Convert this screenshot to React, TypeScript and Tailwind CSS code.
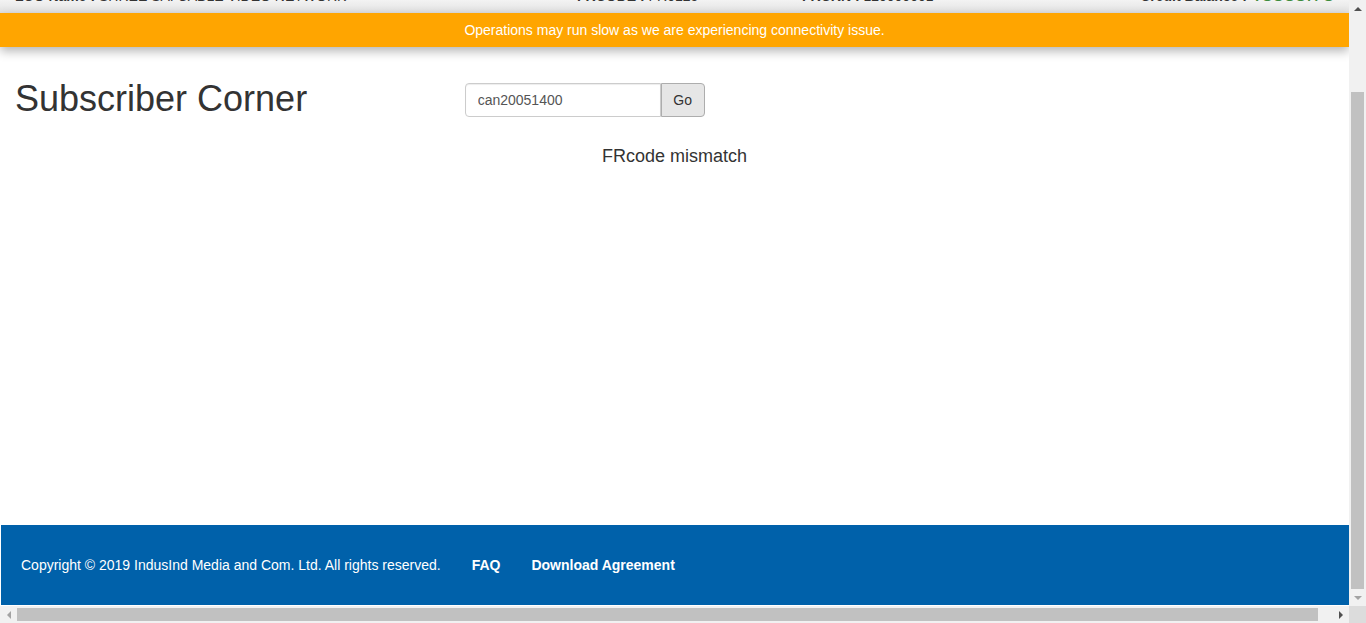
import React from 'react'

const font = { fontFamily: '"Liberation Sans", Arial, sans-serif' }

const Arrow = ({ dir, color }: { dir: 'up' | 'down' | 'left' | 'right'; color: string }) => {
  const pts = {
    up: '0,4 4,0 8,4',
    down: '0,0 8,0 4,4',
    left: '4,0 4,8 0,4',
    right: '0,0 4,4 0,8',
  }[dir]
  const vertical = dir === 'up' || dir === 'down'
  return (
    <svg width={vertical ? 8 : 4} height={vertical ? 4 : 8} viewBox={vertical ? '0 0 8 4' : '0 0 4 8'}>
      <polygon points={pts} fill={color} />
    </svg>
  )
}

// header strip that is almost scrolled out of view
const TopInfo: React.FC = () => (
  <div className="h-[13px] overflow-hidden bg-gradient-to-b from-[#f3f3f3] to-[#e2e2e2]">
    <div className="-mt-[14px] flex h-[20px] items-end text-[14px] leading-[20px] text-[#333] px-[15px]">
      <div className="w-[562px] whitespace-nowrap">
        <b>LCO Name :</b> SHREE SAI CABLE VIDEO NETWORK
      </div>
      <div className="w-[225px] whitespace-nowrap">
        <b>FRCODE :</b> FR0125
      </div>
      <div className="w-[338px] whitespace-nowrap">
        <b>FRCRN :</b> 120000001
      </div>
      <div className="flex-1 whitespace-nowrap text-right">
        <b>Credit Balance : </b>
        <span className="text-[20px] text-[#3d8b3d]">₹8888.78</span>
      </div>
    </div>
  </div>
)

export default function App() {
  return (
    <div className="w-[1366px] h-[623px] overflow-hidden flex flex-col bg-white" style={font}>
      <div className="flex h-[606px]">
        <div className="w-[1349px] h-[606px] flex flex-col overflow-hidden">
          <TopInfo />
          <div className="relative z-10 h-[34px] bg-[#ffa500] flex items-center justify-center text-white text-[14px] shadow-[0_4px_10px_rgba(0,0,0,0.3)]">
            Operations may run slow as we are experiencing connectivity issue.
          </div>

          <main className="flex-1 pt-[32px] text-[#333]">
            <div className="grid grid-cols-3">
              <div className="px-[15px]">
                <h1 className="text-[36px] leading-[40px] font-normal">Subscriber Corner</h1>
              </div>
              <div className="px-[15px] pt-[4px]">
                <div className="flex">
                  <input
                    defaultValue="can20051400"
                    className="w-[196px] h-[34px] border border-[#ccc] rounded-l-[4px] px-[12px] text-[14px] text-[#555] shadow-[inset_0_1px_1px_rgba(0,0,0,0.075)] outline-none"
                    style={font}
                  />
                  <button
                    className="w-[44px] h-[34px] bg-[#e6e6e6] border border-[#adadad] rounded-r-[4px] text-[14px] text-[#333]"
                    style={font}
                  >
                    Go
                  </button>
                </div>
              </div>
            </div>
            <p className="mt-[27px] text-center text-[18px] leading-[20px]">FRcode mismatch</p>
          </main>

          <footer className="ml-px h-[80px] bg-[#0061aa] flex items-center gap-[31px] px-[20px] text-white text-[14px]">
            <span>Copyright © 2019 IndusInd Media and Com. Ltd. All rights reserved.</span>
            <a className="font-bold">FAQ</a>
            <a className="font-bold">Download Agreement</a>
          </footer>
          <div className="h-px bg-white" />
        </div>

        {/* vertical scrollbar */}
        <div className="w-[17px] bg-[#f1f1f1] flex flex-col">
          <div className="h-[17px] flex items-center justify-center">
            <Arrow dir="up" color="#505050" />
          </div>
          <div className="h-[75px]" />
          <div className="mx-[2px] h-[497px] bg-[#c1c1c1]" />
          <div className="h-[17px] flex items-center justify-center">
            <Arrow dir="down" color="#a3a3a3" />
          </div>
        </div>
      </div>

      {/* horizontal scrollbar */}
      <div className="h-[17px] flex bg-[#f1f1f1]">
        <div className="w-[17px] flex items-center justify-center">
          <Arrow dir="left" color="#a3a3a3" />
        </div>
        <div className="w-[1301px] my-[2px] bg-[#c1c1c1]" />
        <div className="flex-1 flex justify-end">
          <div className="w-[17px] flex items-center justify-center">
            <Arrow dir="right" color="#505050" />
          </div>
        </div>
        <div className="w-[17px] bg-[#dcdcdc]" />
      </div>
    </div>
  )
}
